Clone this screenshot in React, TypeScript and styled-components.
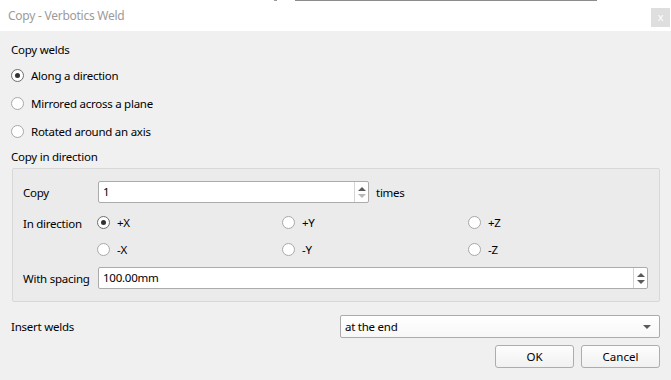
import styled, { createGlobalStyle } from "styled-components";

const GlobalStyle = createGlobalStyle`
  html, body {
    margin: 0;
    padding: 0;
    background: #f0f0f0;
  }
  body {
    font-family: "Noto Sans", "Open Sans", sans-serif;
    font-size: 11.5px;
    letter-spacing: -0.25px;
    color: #000;
  }
`;

const Window = styled.div`
  width: 671px;
  height: 380px;
  background: #f0f0f0;
  overflow: hidden;
`;

const TopEdge = styled.div`
  height: 1px;
  background: linear-gradient(
    to right,
    #fff 0 274px,
    #9a9a9a 274px 277px,
    #fff 277px 295px,
    #8c8c8c 295px 597px,
    #fff 597px
  );
`;

const TitleBar = styled.div`
  height: 30px;
  background: #fff;
  display: flex;
  justify-content: space-between;
  padding-left: 8px;
`;

const Title = styled.span`
  color: #9b9b9b;
  font-size: 12px;
  line-height: 30px;
`;

const CloseButton = styled.div`
  width: 19px;
  height: 19px;
  margin: 7px 1px 0 0;
  background: #dedede;
  color: #fff;
  font-size: 11px;
  line-height: 18px;
  text-align: center;
`;

const Body = styled.div`
  padding: 10px 11px 0 11px;
`;

const SectionLabel = styled.div<{ $top?: number }>`
  height: 18px;
  line-height: 18px;
  margin-top: ${(p) => p.$top ?? 0}px;
`;

const RadioList = styled.div`
  margin-top: 2px;
`;

const RadioRow = styled.label<{ $h?: number }>`
  display: flex;
  align-items: center;
  gap: 7px;
  height: ${(p) => p.$h ?? 28}px;
`;

const RadioCircle = styled.span<{ $checked?: boolean }>`
  width: 13px;
  height: 13px;
  box-sizing: border-box;
  border-radius: 50%;
  border: 1px solid ${(p) => (p.$checked ? "#6e6e6e" : "#a8a8a8")};
  background: #fff;
  display: flex;
  align-items: center;
  justify-content: center;
  flex-shrink: 0;
  &::after {
    content: "";
    display: ${(p) => (p.$checked ? "block" : "none")};
    width: 5px;
    height: 5px;
    border-radius: 50%;
    background: #333;
  }
`;

const GroupBox = styled.div`
  margin: 2px 0 0 1px;
  width: 648px;
  height: 134px;
  box-sizing: border-box;
  border: 1px solid #d8d8d8;
  border-radius: 2px;
  background: #ebebeb;
  padding: 12px 11px 0 10px;
  display: grid;
  grid-template-columns: 75px 1fr;
  grid-template-rows: 22px 32px 32px 22px;
`;

const FieldLabel = styled.div`
  display: flex;
  align-items: center;
  white-space: nowrap;
`;

const DirectionLabel = styled(FieldLabel)`
  align-items: flex-start;
  padding-top: 13px;
`;

const InlineRow = styled.div`
  display: flex;
  align-items: center;
  gap: 7px;
`;

const SpinBox = styled.div<{ $w?: number }>`
  display: flex;
  width: ${(p) => (p.$w ? `${p.$w}px` : "100%")};
  height: 22px;
  box-sizing: border-box;
  background: #fff;
  border: 1px solid #ababab;
  border-radius: 2px;
`;

const SpinText = styled.div`
  flex: 1;
  padding-left: 4px;
  line-height: 20px;
`;

const SpinButtons = styled.div`
  width: 13px;
  border-left: 1px solid #d4d4d4;
  display: flex;
  flex-direction: column;
  align-items: center;
  justify-content: center;
  gap: 3px;
`;

const Arrow = styled.span<{ $down?: boolean; $dim?: boolean }>`
  width: 0;
  height: 0;
  border-left: 4px solid transparent;
  border-right: 4px solid transparent;
  ${(p) =>
    p.$down
      ? `border-top: 4px solid ${p.$dim ? "#b8b8b8" : "#5a5a5a"};`
      : `border-bottom: 4px solid ${p.$dim ? "#b8b8b8" : "#5a5a5a"};`}
`;

const DirectionGrid = styled.div`
  grid-row: 2 / span 2;
  grid-column: 2;
  display: grid;
  grid-template-columns: 185px 186px 1fr;
  grid-template-rows: 27px 27px;
  margin-top: 6px;
  margin-left: -1px;
`;

const InsertRow = styled.div`
  display: flex;
  align-items: center;
  justify-content: space-between;
  margin-top: 13px;
  height: 23px;
`;

const Combo = styled.div`
  width: 320px;
  height: 23px;
  box-sizing: border-box;
  border: 1px solid #ababab;
  border-radius: 2px;
  background: linear-gradient(#fff, #f7f7f7);
  display: flex;
  align-items: center;
  justify-content: space-between;
  padding: 0 8px 0 4px;
`;

const ButtonRow = styled.div`
  display: flex;
  justify-content: flex-end;
  gap: 7px;
  margin-top: 7px;
`;

const Button = styled.button`
  width: 79px;
  height: 23px;
  box-sizing: border-box;
  border: 1px solid #adadad;
  border-radius: 3px;
  background: linear-gradient(#fdfdfd, #f1f1f1);
  font: inherit;
  color: #000;
  padding: 0;
`;

const directions = [
  ["+X", "+Y", "+Z"],
  ["-X", "-Y", "-Z"],
];

const App = () => {
  return (
    <Window>
      <GlobalStyle />
      <TopEdge />
      <TitleBar>
        <Title>Copy - Verbotics Weld</Title>
        <CloseButton>x</CloseButton>
      </TitleBar>
      <Body>
        <SectionLabel>Copy welds</SectionLabel>
        <RadioList>
          <RadioRow>
            <RadioCircle $checked />
            Along a direction
          </RadioRow>
          <RadioRow>
            <RadioCircle />
            Mirrored across a plane
          </RadioRow>
          <RadioRow>
            <RadioCircle />
            Rotated around an axis
          </RadioRow>
        </RadioList>
        <SectionLabel $top={3}>Copy in direction</SectionLabel>
        <GroupBox>
          <FieldLabel>Copy</FieldLabel>
          <InlineRow>
            <SpinBox $w={271}>
              <SpinText>1</SpinText>
              <SpinButtons>
                <Arrow />
                <Arrow $down $dim />
              </SpinButtons>
            </SpinBox>
            times
          </InlineRow>
          <DirectionLabel>In direction</DirectionLabel>
          <DirectionGrid>
            {directions.flat().map((d) => (
              <RadioRow key={d} $h={27}>
                <RadioCircle $checked={d === "+X"} />
                {d}
              </RadioRow>
            ))}
          </DirectionGrid>
          <FieldLabel />
          <FieldLabel>With spacing</FieldLabel>
          <SpinBox>
            <SpinText>100.00mm</SpinText>
            <SpinButtons>
              <Arrow />
              <Arrow $down />
            </SpinButtons>
          </SpinBox>
        </GroupBox>
        <InsertRow>
          <span>Insert welds</span>
          <Combo>
            <span>at the end</span>
            <Arrow $down />
          </Combo>
        </InsertRow>
        <ButtonRow>
          <Button>OK</Button>
          <Button>Cancel</Button>
        </ButtonRow>
      </Body>
    </Window>
  );
};

export default App;
